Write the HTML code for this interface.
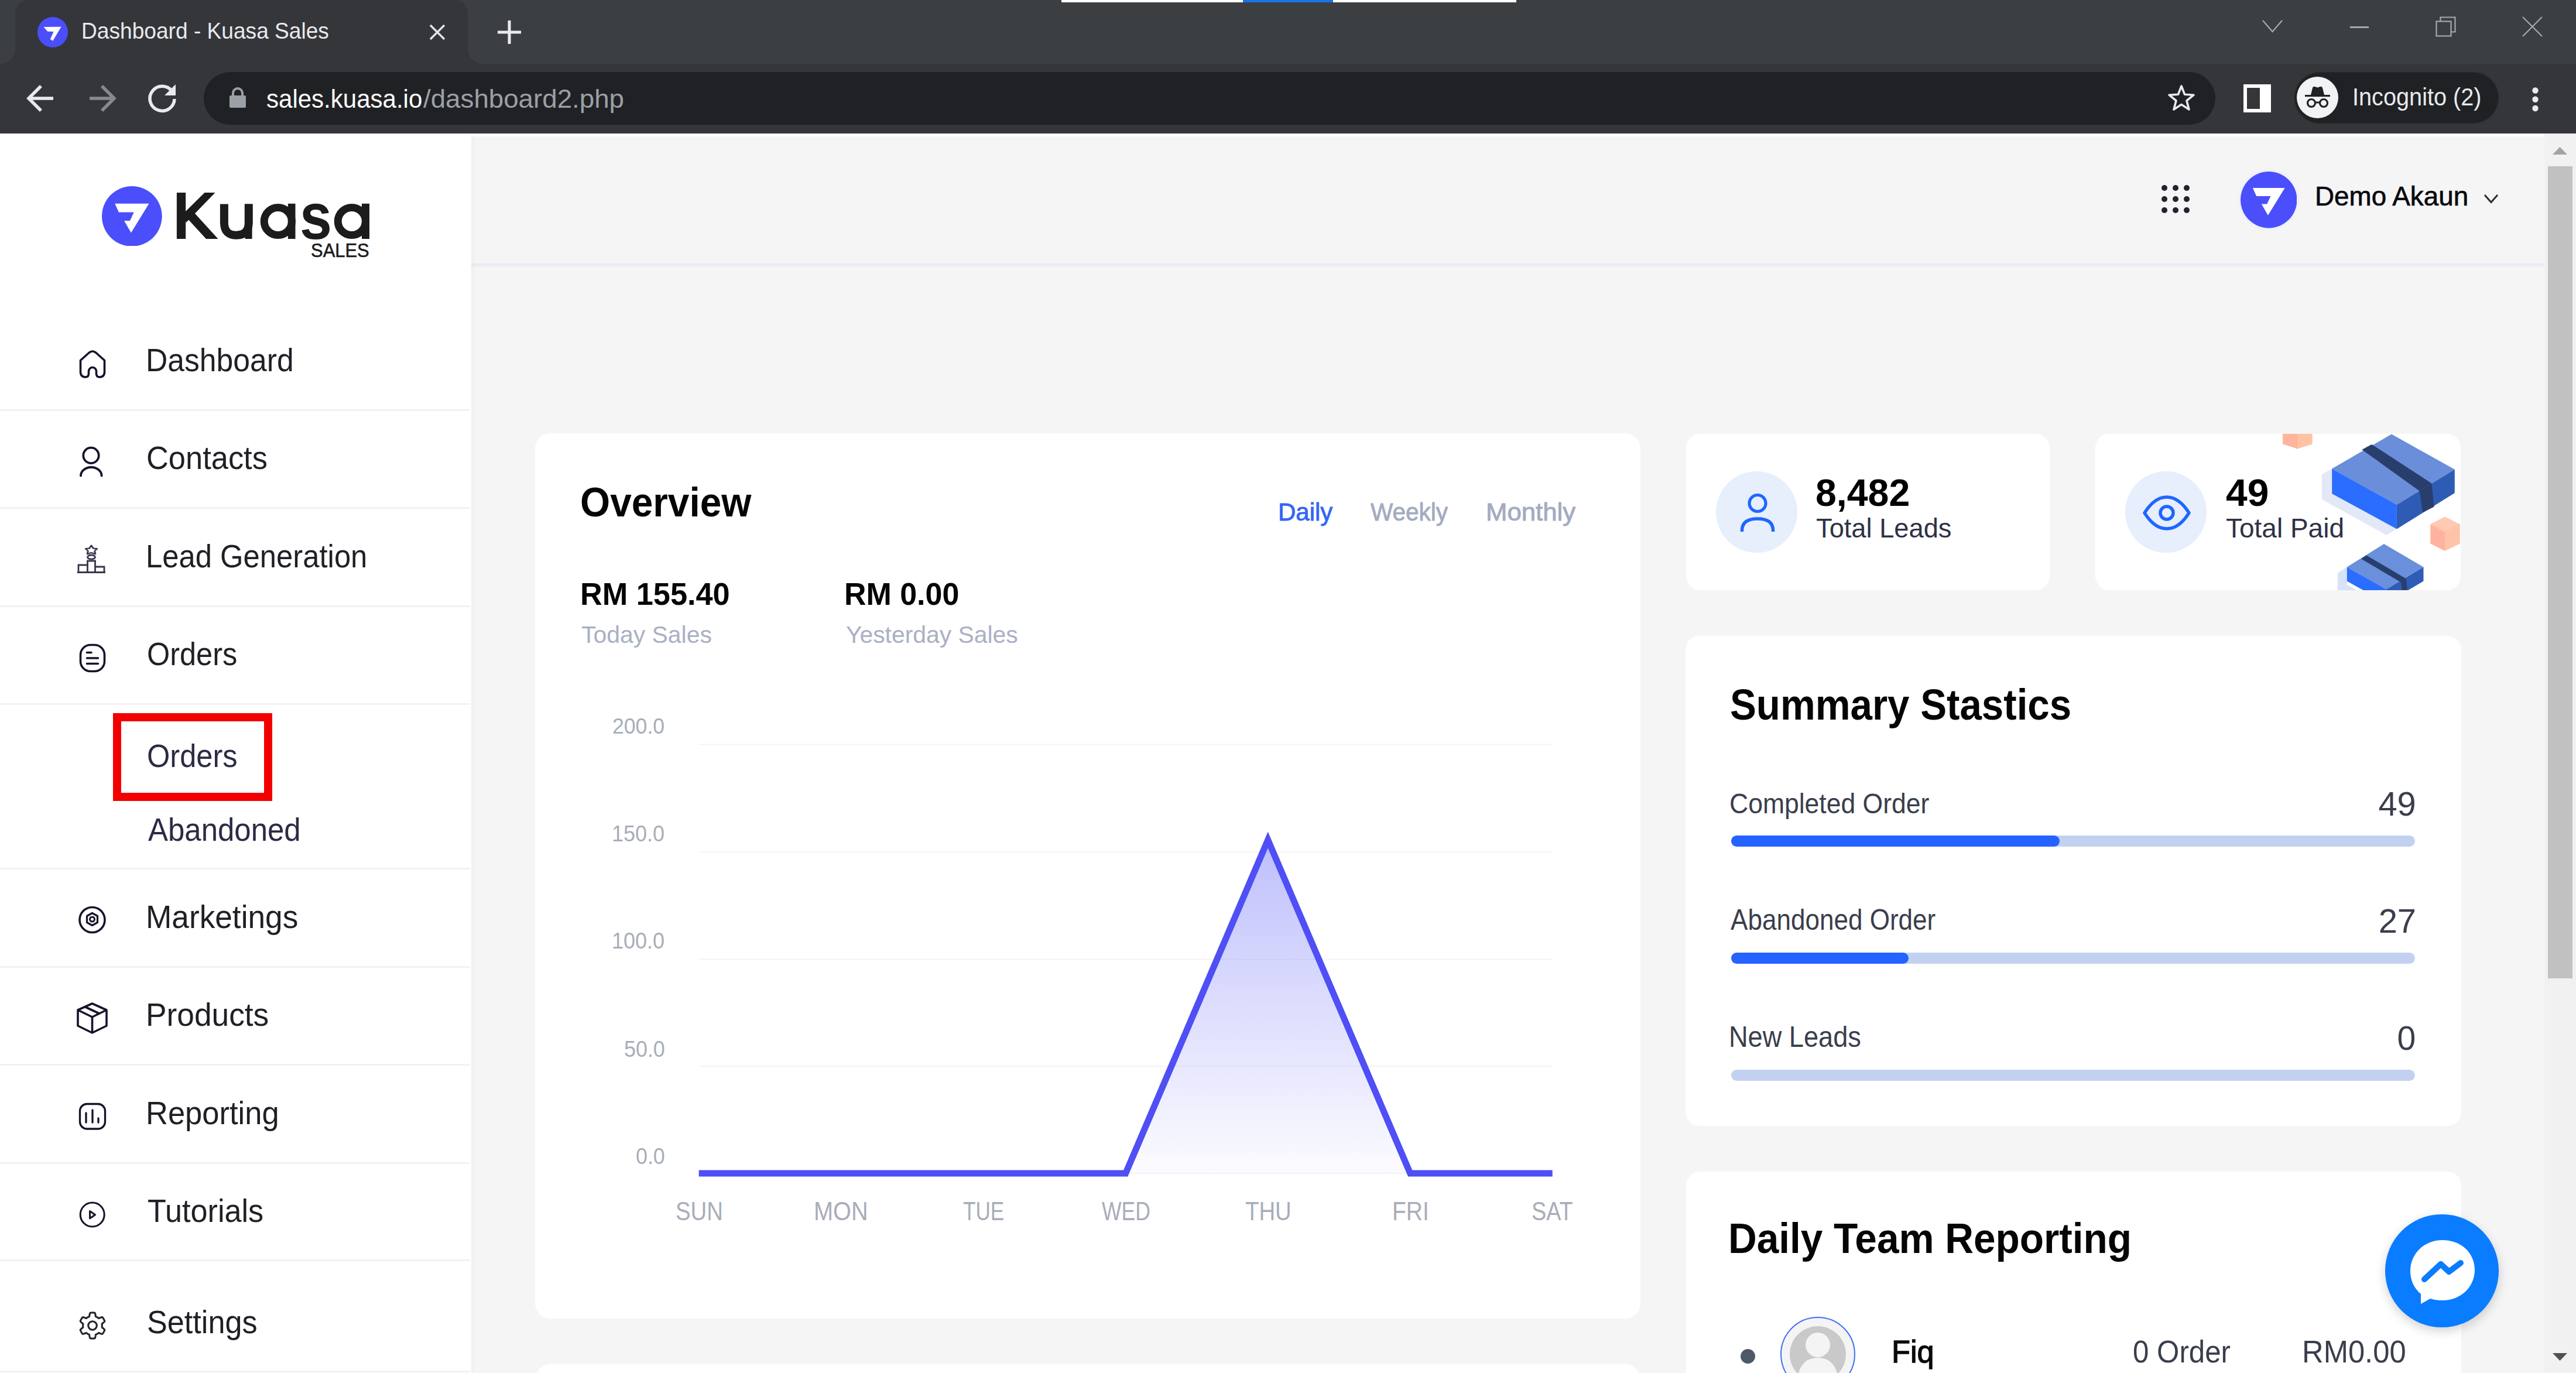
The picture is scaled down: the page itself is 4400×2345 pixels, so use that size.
<!DOCTYPE html>
<html><head><meta charset="utf-8"><title>Dashboard - Kuasa Sales</title>
<style>
html,body{margin:0;padding:0;}
body{width:4400px;height:2345px;position:relative;overflow:hidden;background:#f5f5f5;font-family:"Liberation Sans",sans-serif;}
.a{position:absolute;box-sizing:border-box;}
.t{position:absolute;white-space:pre;transform-origin:0 0;}
</style></head><body>
<div class="a" style="left:0.0px;top:0.0px;width:4400.0px;height:109.0px;background:#3c3f42"></div>
<div class="a" style="left:0.0px;top:109.0px;width:4400.0px;height:119.0px;background:#35363a"></div>
<div class="a" style="left:26.0px;top:0.0px;width:773.0px;height:112.0px;background:#35363a;border-radius:22px 22px 0 0"></div>
<div class="a" style="left:0.0px;top:83.0px;width:26.0px;height:26.0px;background:#35363a"></div>
<div class="a" style="left:0.0px;top:83.0px;width:26.0px;height:26.0px;background:#3c3f42;border-bottom-right-radius:26px"></div>
<div class="a" style="left:799.0px;top:83.0px;width:26.0px;height:26.0px;background:#35363a"></div>
<div class="a" style="left:799.0px;top:83.0px;width:26.0px;height:26.0px;background:#3c3f42;border-bottom-left-radius:26px"></div>
<div class="a" style="left:1813.0px;top:0.0px;width:777.0px;height:3.5px;background:#fff"></div>
<div class="a" style="left:2123.0px;top:0.0px;width:154.0px;height:3.5px;background:#1a73e8"></div>
<svg class="a" style="left:64.0px;top:28.6px;" width="52.0" height="52.0" viewBox="0 0 100 100"><circle cx="50" cy="50" r="50" fill="#4a4ffb"/><path d="M20 32.5L78 32L50.5 78.5L42 73L53 48L33.5 47.5Z" fill="#fff"/></svg>
<span class="t" style="left:139.4px;top:34.0px;font-size:38.97px;line-height:38.97px;color:#e8eaed;transform:scaleX(0.9524);">Dashboard - Kuasa Sales</span>
<svg class="a" style="left:733.0px;top:41.0px;" width="28.0" height="28.0" viewBox="0 0 28 28"><path d="M2 2L26 26M26 2L2 26" stroke="#e1e3e6" stroke-width="3.6"/></svg>
<svg class="a" style="left:850.0px;top:35.0px;" width="40.0" height="40.0" viewBox="0 0 40 40"><path d="M20 0V40M0 20H40" stroke="#e8eaed" stroke-width="5"/></svg>
<svg class="a" style="left:3864.0px;top:34.0px;" width="35.0" height="22.0" viewBox="0 0 35 22"><path d="M1 1L17.5 20L34 1" stroke="#a6a8ab" stroke-width="2.2" fill="none"/></svg>
<div class="a" style="left:4013.5px;top:45.0px;width:32.5px;height:3.0px;background:#a6a8ab"></div>
<svg class="a" style="left:4160.0px;top:28.0px;" width="36.0" height="36.0" viewBox="0 0 36 36"><rect x="1.5" y="8.5" width="25" height="25" fill="none" stroke="#a6a8ab" stroke-width="2.2"/><path d="M8.5 8V1.5H33.5V26.5H27" fill="none" stroke="#a6a8ab" stroke-width="2.2"/></svg>
<svg class="a" style="left:4308.0px;top:28.0px;" width="35.0" height="35.0" viewBox="0 0 35 35"><path d="M1 1L34 34M34 1L1 34" stroke="#a6a8ab" stroke-width="2.2"/></svg>
<svg class="a" style="left:45.0px;top:143.0px;" width="52.0" height="50.0" viewBox="0 0 52 50"><path d="M46 25H6M25 4L4 25L25 46" stroke="#e8eaed" stroke-width="5.5" fill="none"/></svg>
<svg class="a" style="left:149.0px;top:143.0px;" width="52.0" height="50.0" viewBox="0 0 52 50"><path d="M4 25H44M25 4L46 25L25 46" stroke="#87898c" stroke-width="5.5" fill="none"/></svg>
<svg class="a" style="left:250.0px;top:141.0px;" width="56.0" height="54.0" viewBox="0 0 56 54"><path d="M44 15A21 21 0 1 0 48 28" stroke="#e8eaed" stroke-width="5.5" fill="none"/><path d="M50 3V22H31Z" fill="#e8eaed"/></svg>
<div class="a" style="left:347.5px;top:122.5px;width:3436.0px;height:90.0px;background:#202124;border-radius:45px"></div>
<svg class="a" style="left:392.0px;top:148.0px;" width="28.0" height="36.0" viewBox="0 0 28 36"><path d="M6 16V11A8 8 0 0 1 22 11V16" stroke="#9aa0a6" stroke-width="4" fill="none"/><rect x="0" y="15" width="28" height="21" rx="2" fill="#9aa0a6"/></svg>
<span class="t" style="left:454.8px;top:145.5px;font-size:45.17px;line-height:45.17px;color:#ffffff;transform:scaleX(0.9307);">sales.kuasa.io</span>
<span class="t" style="left:722.5px;top:145.5px;font-size:45.17px;line-height:45.17px;color:#9aa0a6;transform:scaleX(1.0120);">/dashboard2.php</span>
<svg class="a" style="left:3701.0px;top:143.0px;" width="50.0" height="50.0" viewBox="0 0 50 50"><path d="M25 4L30.6 18.3L46 19.2L34 29L38 44L25 35.6L12 44L16 29L4 19.2L19.4 18.3Z" stroke="#e8eaed" stroke-width="3.6" fill="none" stroke-linejoin="round"/></svg>
<svg class="a" style="left:3832.0px;top:143.5px;" width="47.0" height="48.0" viewBox="0 0 47 48"><rect x="3" y="3" width="41" height="42" fill="none" stroke="#fff" stroke-width="6"/><rect x="28" y="3" width="16" height="42" fill="#fff"/></svg>
<div class="a" style="left:3919.8px;top:123.8px;width:347.5px;height:86.2px;background:#202124;border-radius:44px;box-shadow:0 0 0 1.5px #2a2b2f"></div>
<svg class="a" style="left:3923.0px;top:131.0px;" width="71.0" height="71.0" viewBox="0 0 71 71"><circle cx="35.5" cy="35.5" r="35.5" fill="#f1f3f4"/><path d="M24 31L27 19Q28 16 31 17L35.5 18.5L40 17Q43 16 44 19L47 31Z" fill="#202124"/><rect x="14" y="31" width="43" height="3.2" fill="#202124"/><circle cx="25" cy="45" r="6.5" fill="none" stroke="#202124" stroke-width="3.2"/><circle cx="46" cy="45" r="6.5" fill="none" stroke="#202124" stroke-width="3.2"/><path d="M31.5 44H39.5" stroke="#202124" stroke-width="3"/></svg>
<span class="t" style="left:4017.8px;top:144.7px;font-size:41.67px;line-height:41.67px;color:#e8eaed;transform:scaleX(0.9525);">Incognito (2)</span>
<svg class="a" style="left:4320.0px;top:144.0px;" width="21.0" height="52.0" viewBox="0 0 21 52"><circle cx="10.5" cy="10.5" r="5.2" fill="#e8eaed"/><circle cx="10.5" cy="25.75" r="5.2" fill="#e8eaed"/><circle cx="10.5" cy="41" r="5.2" fill="#e8eaed"/></svg>
<div class="a" style="left:0.0px;top:228.0px;width:4346.0px;height:2117.0px;background:#f5f5f5"></div>
<div class="a" style="left:4346.0px;top:228.0px;width:54.0px;height:2117.0px;background:#f1f1f1"></div>
<div class="a" style="left:4352.0px;top:283.8px;width:41.5px;height:1387.2px;background:#c1c1c1"></div>
<svg class="a" style="left:4360.0px;top:250.0px;" width="25.0" height="15.0" viewBox="0 0 25 15"><path d="M0 14L12.5 1L25 14Z" fill="#a3a3a3"/></svg>
<svg class="a" style="left:4360.0px;top:2310.0px;" width="25.0" height="15.0" viewBox="0 0 25 15"><path d="M0 1L12.5 14L25 1Z" fill="#505050"/></svg>
<div class="a" style="left:805.0px;top:450.0px;width:3541.0px;height:4.5px;background:#ebebf3"></div>
<div class="a" style="left:805.0px;top:228.0px;width:3541.0px;height:4.5px;background:#fff"></div>
<div class="a" style="left:0.0px;top:228.0px;width:805.0px;height:2117.0px;background:#fff;box-shadow:3px 0 8px rgba(0,0,0,0.035)"></div>
<svg class="a" style="left:174.0px;top:317.8px;" width="102.7" height="102.7" viewBox="0 0 100 100"><circle cx="50" cy="50" r="50" fill="#4a4ffb"/><path d="M21.7 29 L78.4 29 L48.6 77.5 L37.1 57.4 L46.8 57.4 L53.3 43.4 L28.1 43.4 Z" fill="#fff"/></svg>
<svg class="a" style="left:290.0px;top:320.0px;" width="350.0" height="95.0" viewBox="0 0 350 95"><g transform="translate(-290 -320)" fill="#1c1c1c"><rect x="301.9" y="329" width="15.3" height="79"/><path d="M312 366L349.5 329H367.5L318 380Z"/><path d="M331 362.5L372.5 408H352L319 372Z"/><path d="M382.9 348.5V380Q382.9 401.7 403.5 401.7Q424.8 401.7 424.8 380V348.5" fill="none" stroke="#1c1c1c" stroke-width="14"/><rect x="418.6" y="348.5" width="12" height="59.5"/><circle cx="474.8" cy="378" r="23.6" fill="none" stroke="#1c1c1c" stroke-width="13"/><rect x="491.9" y="347.8" width="12.6" height="60.2"/><circle cx="600.8" cy="378" r="23.6" fill="none" stroke="#1c1c1c" stroke-width="13"/><rect x="618" y="347.8" width="13" height="60.2"/></g></svg>
<span class="t" style="left:511.5px;top:314.1px;font-size:111.56px;line-height:111.56px;color:#1c1c1c;font-weight:bold;transform:scaleX(0.8870);">s</span>
<span class="t" style="left:530.6px;top:411.3px;font-size:33.91px;line-height:33.91px;color:#1b1b1b;transform:scaleX(0.9124);-webkit-text-stroke:0.6px #1b1b1b;">SALES</span>
<div class="a" style="left:0.0px;top:699.2px;width:803.0px;height:3.0px;background:#f1f2f7"></div>
<div class="a" style="left:0.0px;top:866.0px;width:803.0px;height:3.0px;background:#f1f2f7"></div>
<div class="a" style="left:0.0px;top:1033.5px;width:803.0px;height:3.0px;background:#f1f2f7"></div>
<div class="a" style="left:0.0px;top:1201.0px;width:803.0px;height:3.0px;background:#f1f2f7"></div>
<div class="a" style="left:0.0px;top:1482.0px;width:803.0px;height:3.0px;background:#f1f2f7"></div>
<div class="a" style="left:0.0px;top:1649.5px;width:803.0px;height:3.0px;background:#f1f2f7"></div>
<div class="a" style="left:0.0px;top:1817.0px;width:803.0px;height:3.0px;background:#f1f2f7"></div>
<div class="a" style="left:0.0px;top:1984.5px;width:803.0px;height:3.0px;background:#f1f2f7"></div>
<div class="a" style="left:0.0px;top:2151.0px;width:803.0px;height:3.0px;background:#f1f2f7"></div>
<div class="a" style="left:0.0px;top:2341.0px;width:803.0px;height:3.0px;background:#f1f2f7"></div>
<span class="t" style="left:248.7px;top:587.1px;font-size:55.80px;line-height:55.80px;color:#1f1f26;transform:scaleX(0.9254);">Dashboard</span>
<span class="t" style="left:250.4px;top:754.3px;font-size:55.80px;line-height:55.80px;color:#1f1f26;transform:scaleX(0.9396);">Contacts</span>
<span class="t" style="left:248.8px;top:921.8px;font-size:55.80px;line-height:55.80px;color:#1f1f26;transform:scaleX(0.9102);">Lead Generation</span>
<span class="t" style="left:250.6px;top:1089.3px;font-size:55.80px;line-height:55.80px;color:#1f1f26;transform:scaleX(0.9044);">Orders</span>
<span class="t" style="left:250.6px;top:1262.8px;font-size:55.80px;line-height:55.80px;color:#2b2b45;transform:scaleX(0.9062);">Orders</span>
<span class="t" style="left:252.9px;top:1389.0px;font-size:55.80px;line-height:55.80px;color:#2b2b45;transform:scaleX(0.9131);">Abandoned</span>
<span class="t" style="left:248.6px;top:1537.8px;font-size:55.80px;line-height:55.80px;color:#1f1f26;transform:scaleX(0.9538);">Marketings</span>
<span class="t" style="left:248.6px;top:1705.3px;font-size:55.80px;line-height:55.80px;color:#1f1f26;transform:scaleX(0.9546);">Products</span>
<span class="t" style="left:248.7px;top:1872.8px;font-size:55.80px;line-height:55.80px;color:#1f1f26;transform:scaleX(0.9410);">Reporting</span>
<span class="t" style="left:251.8px;top:2039.8px;font-size:55.80px;line-height:55.80px;color:#1f1f26;transform:scaleX(0.9354);">Tutorials</span>
<span class="t" style="left:250.7px;top:2229.8px;font-size:55.80px;line-height:55.80px;color:#1f1f26;transform:scaleX(0.9356);">Settings</span>
<svg class="a" style="left:133.0px;top:595.0px;" width="50.0" height="52.0" viewBox="0 0 50 52"><path d="M4.5 20.5L19 7.5Q25 2.5 31 7.5L45.5 20.5V40Q45.5 49 37 49Q31.5 49 31.5 43V39A6.5 6.5 0 0 0 18.5 39V43Q18.5 49 13 49Q4.5 49 4.5 40Z" fill="none" stroke="#16132c" stroke-width="3.6" stroke-linejoin="round"/></svg>
<svg class="a" style="left:133.0px;top:762.0px;" width="46.0" height="56.0" viewBox="0 0 46 56"><circle cx="22.5" cy="15.9" r="13.2" fill="none" stroke="#16132c" stroke-width="3.8"/><path d="M5 50.5A17.8 14.5 0 0 1 40.6 50.5" fill="none" stroke="#16132c" stroke-width="3.9" stroke-linecap="round"/></svg>
<svg class="a" style="left:130.0px;top:930.0px;opacity:0.85" width="52.0" height="52.0" viewBox="0 0 52 52"><path transform="translate(0 0.8) scale(1 0.8)" d="M26.0 1.0L29.5 7.3L35.8 8.0L31.6 12.9L33.0 19.2L26.0 16.4L19.0 19.2L20.4 12.9L16.2 8.0L22.5 7.3Z" fill="none" stroke="#16132c" stroke-width="2.8" stroke-linejoin="round"/><ellipse cx="26" cy="21.5" rx="6.5" ry="3.5" fill="none" stroke="#16132c" stroke-width="2.8"/><path d="M19.5 47V28H32.5V47" fill="none" stroke="#16132c" stroke-width="2.8"/><path d="M4 47V35H19.5M32.5 38H48V47M2 47.5H50" fill="none" stroke="#16132c" stroke-width="2.8"/></svg>
<svg class="a" style="left:133.0px;top:1097.0px;" width="50.0" height="54.0" viewBox="0 0 50 54"><rect x="4.5" y="4.5" width="41" height="45" rx="17" fill="none" stroke="#16132c" stroke-width="3.6"/><path d="M15.5 17.5H23M15.5 27H34.5M15.5 36.5H34.5" stroke="#16132c" stroke-width="3.6" stroke-linecap="round"/></svg>
<svg class="a" style="left:132.0px;top:1545.0px;" width="51.0" height="52.0" viewBox="0 0 51 52"><circle cx="25.5" cy="26" r="21.5" fill="none" stroke="#16132c" stroke-width="3.6"/><path d="M25.5 14.5L34.5 19.5V30.5L25.5 35.5L16.5 30.5V19.5Z" fill="none" stroke="#16132c" stroke-width="3.2" stroke-linejoin="round"/><circle cx="25.5" cy="25" r="4" fill="none" stroke="#16132c" stroke-width="3"/></svg>
<svg class="a" style="left:129.0px;top:1710.0px;" width="57.0" height="58.0" viewBox="0 0 57 58"><path d="M28.5 4L53 15V42L28.5 54L4 42V15Z M4 15L28.5 27L53 15 M28.5 27V54 M16 9.5L40.5 21" fill="none" stroke="#16132c" stroke-width="3.6" stroke-linejoin="round"/></svg>
<svg class="a" style="left:130.0px;top:1880.0px;" width="53.0" height="52.0" viewBox="0 0 53 52"><rect x="6.5" y="5.5" width="43" height="42.5" rx="12" fill="none" stroke="#16132c" stroke-width="3.3"/><path d="M17 21V37M28 16V37M38 30V37" stroke="#16132c" stroke-width="3.3" stroke-linecap="round"/></svg>
<svg class="a" style="left:133.0px;top:2050.0px;" width="50.0" height="50.0" viewBox="0 0 50 50"><circle cx="24.7" cy="24.5" r="20.5" fill="none" stroke="#16132c" stroke-width="3.1"/><path d="M20.5 18.5L29.5 24.8L20.5 31Z" fill="none" stroke="#16132c" stroke-width="3" stroke-linejoin="round"/></svg>
<svg class="a" style="left:132.7px;top:2239.0px;" width="50.0" height="50.0" viewBox="0 0 50 50"><path d="M25.00 2.90 L25.58 2.91 L26.16 2.93 L26.73 2.97 L27.31 3.02 L27.88 3.09 L28.46 3.17 L29.03 3.27 L29.40 4.29 L29.72 5.36 L29.97 6.45 L30.17 7.55 L30.32 8.61 L30.44 9.63 L30.84 9.78 L31.24 9.94 L31.63 10.11 L32.02 10.29 L32.40 10.48 L32.78 10.68 L33.15 10.88 L33.52 11.10 L33.88 11.33 L34.23 11.57 L34.58 11.81 L34.92 12.07 L35.26 12.33 L35.59 12.60 L36.53 12.20 L37.53 11.80 L38.58 11.42 L39.65 11.10 L40.73 10.83 L41.80 10.65 L42.17 11.09 L42.53 11.55 L42.88 12.01 L43.21 12.48 L43.53 12.96 L43.84 13.45 L44.14 13.95 L44.42 14.45 L44.69 14.97 L44.95 15.49 L45.19 16.01 L45.42 16.54 L45.63 17.08 L45.83 17.62 L45.14 18.46 L44.37 19.26 L43.55 20.03 L42.70 20.75 L41.85 21.42 L41.03 22.03 L41.10 22.45 L41.16 22.87 L41.21 23.30 L41.25 23.72 L41.28 24.15 L41.29 24.57 L41.30 25.00 L41.29 25.43 L41.28 25.85 L41.25 26.28 L41.21 26.70 L41.16 27.13 L41.10 27.55 L41.03 27.97 L41.85 28.58 L42.70 29.25 L43.55 29.97 L44.37 30.74 L45.14 31.54 L45.83 32.38 L45.63 32.92 L45.42 33.46 L45.19 33.99 L44.95 34.51 L44.69 35.03 L44.42 35.55 L44.14 36.05 L43.84 36.55 L43.53 37.04 L43.21 37.52 L42.88 37.99 L42.53 38.45 L42.17 38.91 L41.80 39.35 L40.73 39.17 L39.65 38.90 L38.58 38.58 L37.53 38.20 L36.53 37.80 L35.59 37.40 L35.26 37.67 L34.92 37.93 L34.58 38.19 L34.23 38.43 L33.88 38.67 L33.52 38.90 L33.15 39.12 L32.78 39.32 L32.40 39.52 L32.02 39.71 L31.63 39.89 L31.24 40.06 L30.84 40.22 L30.44 40.37 L30.32 41.39 L30.17 42.45 L29.97 43.55 L29.72 44.64 L29.40 45.71 L29.03 46.73 L28.46 46.83 L27.88 46.91 L27.31 46.98 L26.73 47.03 L26.16 47.07 L25.58 47.09 L25.00 47.10 L24.42 47.09 L23.84 47.07 L23.27 47.03 L22.69 46.98 L22.12 46.91 L21.54 46.83 L20.97 46.73 L20.60 45.71 L20.28 44.64 L20.03 43.55 L19.83 42.45 L19.68 41.39 L19.56 40.37 L19.16 40.22 L18.76 40.06 L18.37 39.89 L17.98 39.71 L17.60 39.52 L17.22 39.32 L16.85 39.12 L16.48 38.90 L16.12 38.67 L15.77 38.43 L15.42 38.19 L15.08 37.93 L14.74 37.67 L14.41 37.40 L13.47 37.80 L12.47 38.20 L11.42 38.58 L10.35 38.90 L9.27 39.17 L8.20 39.35 L7.83 38.91 L7.47 38.45 L7.12 37.99 L6.79 37.52 L6.47 37.04 L6.16 36.55 L5.86 36.05 L5.58 35.55 L5.31 35.03 L5.05 34.51 L4.81 33.99 L4.58 33.46 L4.37 32.92 L4.17 32.38 L4.86 31.54 L5.63 30.74 L6.45 29.97 L7.30 29.25 L8.15 28.58 L8.97 27.97 L8.90 27.55 L8.84 27.13 L8.79 26.70 L8.75 26.28 L8.72 25.85 L8.71 25.43 L8.70 25.00 L8.71 24.57 L8.72 24.15 L8.75 23.72 L8.79 23.30 L8.84 22.87 L8.90 22.45 L8.97 22.03 L8.15 21.42 L7.30 20.75 L6.45 20.03 L5.63 19.26 L4.86 18.46 L4.17 17.62 L4.37 17.08 L4.58 16.54 L4.81 16.01 L5.05 15.49 L5.31 14.97 L5.58 14.45 L5.86 13.95 L6.16 13.45 L6.47 12.96 L6.79 12.48 L7.12 12.01 L7.47 11.55 L7.83 11.09 L8.20 10.65 L9.27 10.83 L10.35 11.10 L11.42 11.42 L12.47 11.80 L13.47 12.20 L14.41 12.60 L14.74 12.33 L15.08 12.07 L15.42 11.81 L15.77 11.57 L16.12 11.33 L16.48 11.10 L16.85 10.88 L17.22 10.68 L17.60 10.48 L17.98 10.29 L18.37 10.11 L18.76 9.94 L19.16 9.78 L19.56 9.63 L19.68 8.61 L19.83 7.55 L20.03 6.45 L20.28 5.36 L20.60 4.29 L20.97 3.27 L21.54 3.17 L22.12 3.09 L22.69 3.02 L23.27 2.97 L23.84 2.93 L24.42 2.91Z" fill="none" stroke="#24242e" stroke-width="3.1" stroke-linejoin="round"/><circle cx="25" cy="25" r="7.3" fill="none" stroke="#24242e" stroke-width="3.1"/></svg>
<div class="a" style="left:193.0px;top:1218.0px;width:272.0px;height:150.0px;border:14px solid #f20000;box-sizing:border-box"></div>
<div class="a" style="left:3691.6px;top:316.0px;width:10px;height:10px;border-radius:50%;background:#23232d"></div>
<div class="a" style="left:3691.6px;top:335.2px;width:10px;height:10px;border-radius:50%;background:#23232d"></div>
<div class="a" style="left:3691.6px;top:354.4px;width:10px;height:10px;border-radius:50%;background:#23232d"></div>
<div class="a" style="left:3711.0px;top:316.0px;width:10px;height:10px;border-radius:50%;background:#23232d"></div>
<div class="a" style="left:3711.0px;top:335.2px;width:10px;height:10px;border-radius:50%;background:#23232d"></div>
<div class="a" style="left:3711.0px;top:354.4px;width:10px;height:10px;border-radius:50%;background:#23232d"></div>
<div class="a" style="left:3730.2px;top:316.0px;width:10px;height:10px;border-radius:50%;background:#23232d"></div>
<div class="a" style="left:3730.2px;top:335.2px;width:10px;height:10px;border-radius:50%;background:#23232d"></div>
<div class="a" style="left:3730.2px;top:354.4px;width:10px;height:10px;border-radius:50%;background:#23232d"></div>
<div class="a" style="left:3823.0px;top:289.0px;width:104.0px;height:104.0px;border-radius:50%;background:#eef1fa"></div>
<svg class="a" style="left:3826.8px;top:293.1px;" width="96.5" height="96.5" viewBox="0 0 100 100"><circle cx="50" cy="50" r="50" fill="#4a4ffb"/><path d="M21.7 29 L78.4 29 L48.6 77.5 L37.1 57.4 L46.8 57.4 L53.3 43.4 L28.1 43.4 Z" fill="#fff"/></svg>
<span class="t" style="left:3954.2px;top:311.7px;font-size:46.38px;line-height:46.38px;color:#0a0a10;transform:scaleX(0.9873);-webkit-text-stroke:0.7px #0a0a10;">Demo Akaun</span>
<svg class="a" style="left:4242.0px;top:331.0px;" width="26.0" height="18.0" viewBox="0 0 26 18"><path d="M2 2L13 14.5L24 2" stroke="#2b2b33" stroke-width="3" fill="none"/></svg>
<div class="a" style="left:914.0px;top:740.0px;width:1888.0px;height:1512.0px;background:#fff;border-radius:26px"></div>
<span class="t" style="left:991.4px;top:821.9px;font-size:71.01px;line-height:71.01px;color:#050505;font-weight:bold;transform:scaleX(0.9260);">Overview</span>
<span class="t" style="left:2183.2px;top:852.6px;font-size:42.61px;line-height:42.61px;color:#3466f6;transform:scaleX(0.9849);-webkit-text-stroke:0.9px #3466f6;">Daily</span>
<span class="t" style="left:2341.4px;top:852.6px;font-size:42.61px;line-height:42.61px;color:#a3abc0;transform:scaleX(0.9510);-webkit-text-stroke:0.9px #a3abc0;">Weekly</span>
<span class="t" style="left:2537.7px;top:852.6px;font-size:42.61px;line-height:42.61px;color:#a3abc0;transform:scaleX(1.0267);-webkit-text-stroke:0.9px #a3abc0;">Monthly</span>
<span class="t" style="left:990.5px;top:987.1px;font-size:54.20px;line-height:54.20px;color:#050505;font-weight:bold;transform:scaleX(0.9644);">RM 155.40</span>
<span class="t" style="left:1442.2px;top:987.1px;font-size:54.20px;line-height:54.20px;color:#050505;font-weight:bold;transform:scaleX(0.9587);">RM 0.00</span>
<span class="t" style="left:993.1px;top:1063.5px;font-size:40.00px;line-height:40.00px;color:#a9b0c4;transform:scaleX(1.0227);">Today Sales</span>
<span class="t" style="left:1444.8px;top:1063.5px;font-size:40.00px;line-height:40.00px;color:#a9b0c4;transform:scaleX(1.0210);">Yesterday Sales</span>
<span class="t" style="left:1046.2px;top:1222.6px;font-size:36.71px;line-height:36.71px;color:#a8adb8;transform:scaleX(0.9699);">200.0</span>
<span class="t" style="left:1045.3px;top:1404.2px;font-size:39.29px;line-height:39.29px;color:#a8adb8;transform:scaleX(0.9159);">150.0</span>
<span class="t" style="left:1045.3px;top:1588.3px;font-size:38.57px;line-height:38.57px;color:#a8adb8;transform:scaleX(0.9329);">100.0</span>
<span class="t" style="left:1065.6px;top:1771.7px;font-size:39.29px;line-height:39.29px;color:#a8adb8;transform:scaleX(0.9132);">50.0</span>
<span class="t" style="left:1085.6px;top:1955.8px;font-size:38.57px;line-height:38.57px;color:#a8adb8;transform:scaleX(0.9284);">0.0</span>
<span class="t" style="left:1154.0px;top:2047.7px;font-size:43.62px;line-height:43.62px;color:#a8adb8;transform:scaleX(0.8777);">SUN</span>
<span class="t" style="left:1390.4px;top:2047.7px;font-size:43.62px;line-height:43.62px;color:#a8adb8;transform:scaleX(0.9095);">MON</span>
<span class="t" style="left:1644.9px;top:2047.7px;font-size:43.62px;line-height:43.62px;color:#a8adb8;transform:scaleX(0.8056);">TUE</span>
<span class="t" style="left:1882.0px;top:2047.7px;font-size:43.62px;line-height:43.62px;color:#a8adb8;transform:scaleX(0.8144);">WED</span>
<span class="t" style="left:2127.3px;top:2047.7px;font-size:43.62px;line-height:43.62px;color:#a8adb8;transform:scaleX(0.8794);">THU</span>
<span class="t" style="left:2377.5px;top:2047.7px;font-size:43.62px;line-height:43.62px;color:#a8adb8;transform:scaleX(0.8946);">FRI</span>
<span class="t" style="left:2616.0px;top:2047.7px;font-size:43.62px;line-height:43.62px;color:#a8adb8;transform:scaleX(0.8648);">SAT</span>
<svg class="a" style="left:0;top:0" width="4400" height="2345" viewBox="0 0 4400 2345"><defs><linearGradient id="ag" x1="0" y1="1434.6144" x2="0" y2="2004" gradientUnits="userSpaceOnUse"><stop offset="0" stop-color="#5557f6" stop-opacity="0.38"/><stop offset="1" stop-color="#5557f6" stop-opacity="0.02"/></linearGradient></defs>
<line x1="1193" x2="2652" y1="1271.3" y2="1271.3" stroke="#f4f4f7" stroke-width="2"/><line x1="1193" x2="2652" y1="1455.2" y2="1455.2" stroke="#f4f4f7" stroke-width="2"/><line x1="1193" x2="2652" y1="1638.5" y2="1638.5" stroke="#f4f4f7" stroke-width="2"/><line x1="1193" x2="2652" y1="1821" y2="1821" stroke="#f4f4f7" stroke-width="2"/><line x1="1193" x2="2652" y1="2004" y2="2004" stroke="#f4f4f7" stroke-width="2"/><polygon points="1193.7,2004 1193.7,2004.0 1436.7,2004.0 1679.7,2004.0 1922.7,2004.0 2165.7,1434.6 2408.7,2004.0 2651.7,2004.0 2651.7,2004" fill="url(#ag)"/><polyline points="1193.7,2004.0 1436.7,2004.0 1679.7,2004.0 1922.7,2004.0 2165.7,1434.6 2408.7,2004.0 2651.7,2004.0" fill="none" stroke="#4f4ff5" stroke-width="11" stroke-linejoin="miter"/></svg>
<div class="a" style="left:914.0px;top:2330.0px;width:1888.0px;height:70.0px;background:#fff;border-radius:26px"></div>
<div class="a" style="left:2879.6px;top:740.6px;width:621.1px;height:267.7px;background:#fff;border-radius:24px"></div>
<div class="a" style="left:2930.5px;top:805.0px;width:139.1px;height:139.0px;background:#e7eefc;border-radius:50%"></div>
<svg class="a" style="left:2966.0px;top:842.0px;" width="72.0" height="66.0" viewBox="0 -6 72 66"><circle cx="36" cy="11.5" r="14" fill="none" stroke="#1f66ff" stroke-width="5.2" transform="translate(0 0)"/><path d="M9.5 62V58Q9.5 38 36 38Q62.5 38 62.5 58V62" fill="none" stroke="#1f66ff" stroke-width="5.5"/></svg>
<span class="t" style="left:3100.8px;top:808.6px;font-size:65.29px;line-height:65.29px;color:#000;font-weight:bold;transform:scaleX(0.9874);">8,482</span>
<span class="t" style="left:3101.9px;top:877.6px;font-size:47.10px;line-height:47.10px;color:#2e3246;transform:scaleX(0.9609);">Total Leads</span>
<div class="a" style="left:3579px;top:740.6px;width:623.8px;height:267.7px;background:#fff;border-radius:24px;overflow:hidden"><svg style="position:absolute;left:0;top:0" width="623.8" height="267.7" viewBox="3579 740.6 623.8 267.7"><path d="M3966 809.7 L3966 852.6 L4076 913.5 L4093.9 903.1 L3983.2 842.9 L3983.2 800Z" fill="#e3e8f6"/><path d="M3983.2 800 L4084.9 741.2 L4192.8 801.4 L4093.9 861.6 Z" fill="#6a8ed9"/><path d="M3983.2 800 L4093.9 861.6 L4093.9 903.1 L3983.2 842.9 Z" fill="#2a6dff"/><path d="M4093.9 861.6 L4192.8 801.4 L4192.8 841.5 L4093.9 903.1 Z" fill="#2e5cb5"/><path d="M4034.4 767.5 L4051 758.5 L4153.4 825 L4132.6 838.1 Z" fill="#283e6c"/><path d="M4132.6 838.1 L4153.4 825 L4157.6 865.1 L4138.2 874.8 Z" fill="#283e6c"/><path d="M3899 740.6 L3949.4 740.6 L3949.4 758 L3924 766 L3899 758Z" fill="#ffb49b"/><path d="M3924 740.6 L3949.4 740.6 L3949.4 758 L3924 766Z" fill="#ffc3a3"/><path d="M4151.3 895 L4176 882.4 L4201.5 895 L4201.5 928 L4176 940.4 L4151.3 928Z" fill="#ffb39f"/><path d="M4176 908 L4201.5 895 L4201.5 928 L4176 940.4Z" fill="#ffc4a8"/><path d="M4151.3 895 L4176 882.4 L4201.5 895 L4176 908Z" fill="#ffc9b4"/><path d="M3993 978 L3993 1010 L4030 1010 L4008.8 998 L4008.8 968Z" fill="#d7e2fb"/><path d="M4008.8 968.2 L4072 928.5 L4139.5 968.2 L4076 1006 Z" fill="#6a8fdb"/><path d="M4008.8 968.2 L4076 1006 L4076 1030 L4008.8 992 Z" fill="#2a6dff"/><path d="M4076 1006 L4139.5 968.2 L4139.5 992 L4076 1030 Z" fill="#2f5cb6"/><path d="M4042 948 L4110 988 L4101 994 L4033 954Z" fill="#283f6e"/><path d="M4101 994 L4110 988 L4112 1010 L4103 1012Z" fill="#283f6e"/></svg></div>
<div class="a" style="left:3630.0px;top:805.0px;width:138.6px;height:139.0px;background:#e7eefc;border-radius:50%"></div>
<svg class="a" style="left:3659.0px;top:843.0px;" width="84.0" height="66.0" viewBox="0 0 84 66"><path d="M4 33Q21 6 42 6Q63 6 80 33Q63 60 42 60Q21 60 4 33Z" fill="none" stroke="#1f66ff" stroke-width="5.5" stroke-linejoin="round"/><circle cx="42" cy="33" r="11" fill="none" stroke="#1f66ff" stroke-width="5.5"/></svg>
<span class="t" style="left:3801.9px;top:808.6px;font-size:65.29px;line-height:65.29px;color:#000;font-weight:bold;transform:scaleX(1.0101);">49</span>
<span class="t" style="left:3801.9px;top:877.6px;font-size:47.10px;line-height:47.10px;color:#2e3246;transform:scaleX(0.9765);">Total Paid</span>
<div class="a" style="left:2879.0px;top:1085.8px;width:1324.5px;height:836.8px;background:#fff;border-radius:24px"></div>
<span class="t" style="left:2954.5px;top:1165.7px;font-size:74.78px;line-height:74.78px;color:#050505;font-weight:bold;transform:scaleX(0.8995);">Summary Stastics</span>
<span class="t" style="left:2954.3px;top:1347.9px;font-size:48.55px;line-height:48.55px;color:#3a3e4c;transform:scaleX(0.9168);">Completed Order</span>
<span class="t" style="left:4062.4px;top:1345.0px;font-size:57.86px;line-height:57.86px;color:#3a3e4c;">49</span>
<div class="a" style="left:2956.5px;top:1426.5px;width:1168.5px;height:19.3px;background:#c3d1f1;border-radius:10px"></div>
<div class="a" style="left:2956.5px;top:1426.5px;width:561.2px;height:19.3px;background:#2463ff;border-radius:10px"></div>
<span class="t" style="left:2956.4px;top:1547.0px;font-size:49.57px;line-height:49.57px;color:#3a3e4c;transform:scaleX(0.8889);">Abandoned Order</span>
<span class="t" style="left:4062.7px;top:1545.0px;font-size:57.86px;line-height:57.86px;color:#3a3e4c;">27</span>
<div class="a" style="left:2956.5px;top:1626.5px;width:1168.5px;height:19.3px;background:#c3d1f1;border-radius:10px"></div>
<div class="a" style="left:2956.5px;top:1626.5px;width:303.2px;height:19.3px;background:#2463ff;border-radius:10px"></div>
<span class="t" style="left:2952.8px;top:1747.0px;font-size:49.57px;line-height:49.57px;color:#3a3e4c;transform:scaleX(0.9107);">New Leads</span>
<span class="t" style="left:4094.4px;top:1745.1px;font-size:57.14px;line-height:57.14px;color:#3a3e4c;">0</span>
<div class="a" style="left:2956.5px;top:1826.5px;width:1168.5px;height:19.3px;background:#c3d1f1;border-radius:10px"></div>
<div class="a" style="left:2880.0px;top:2001.0px;width:1323.8px;height:399.0px;background:#fff;border-radius:24px"></div>
<span class="t" style="left:2952.4px;top:2079.8px;font-size:71.74px;line-height:71.74px;color:#050505;font-weight:bold;transform:scaleX(0.9411);">Daily Team Reporting</span>
<div class="a" style="left:2973.0px;top:2303.7px;width:25.0px;height:25.0px;background:#4e5968;border-radius:50%"></div>
<svg class="a" style="left:3039.0px;top:2247.0px;" width="132.0" height="132.0" viewBox="0 0 132 132"><defs><clipPath id="av"><circle cx="66" cy="66" r="48"/></clipPath></defs><circle cx="66" cy="66" r="63" fill="#f4f4f4" stroke="#3f6ff6" stroke-width="2"/><circle cx="66" cy="66" r="48" fill="#c9c9c9"/><g clip-path="url(#av)"><circle cx="66" cy="50" r="21" fill="#f4f4f4"/><path d="M30 130Q28 72 66 72Q104 72 102 130Z" fill="#f4f4f4"/></g></svg>
<span class="t" style="left:3230.7px;top:2281.2px;font-size:54.06px;line-height:54.06px;color:#0a0a0a;transform:scaleX(0.9677);-webkit-text-stroke:1.3px #0a0a0a;">Fiq</span>
<span class="t" style="left:3643.4px;top:2281.2px;font-size:54.06px;line-height:54.06px;color:#3a3e4c;transform:scaleX(0.9113);">0 Order</span>
<span class="t" style="left:3931.8px;top:2281.2px;font-size:54.06px;line-height:54.06px;color:#3a3e4c;transform:scaleX(0.9386);">RM0.00</span>
<div class="a" style="left:4074.4px;top:2074.3px;width:193.6px;height:192.6px;background:#0a7cff;border-radius:50%;box-shadow:0 6px 18px rgba(0,0,0,0.18)"></div>
<svg class="a" style="left:4114.0px;top:2115.0px;" width="116.0" height="114.0" viewBox="0 0 116 114"><path d="M58 3C27 3 3 26 3 56C3 72 10 86 21 95V112L37 103C43 105 50 106 58 106C89 106 113 83 113 54C113 24 89 3 58 3Z" fill="#fff"/><path d="M27 70L55 44L69 57L89 42" fill="none" stroke="#0a7cff" stroke-width="10" stroke-linejoin="round" stroke-linecap="round"/></svg>
</body></html>
